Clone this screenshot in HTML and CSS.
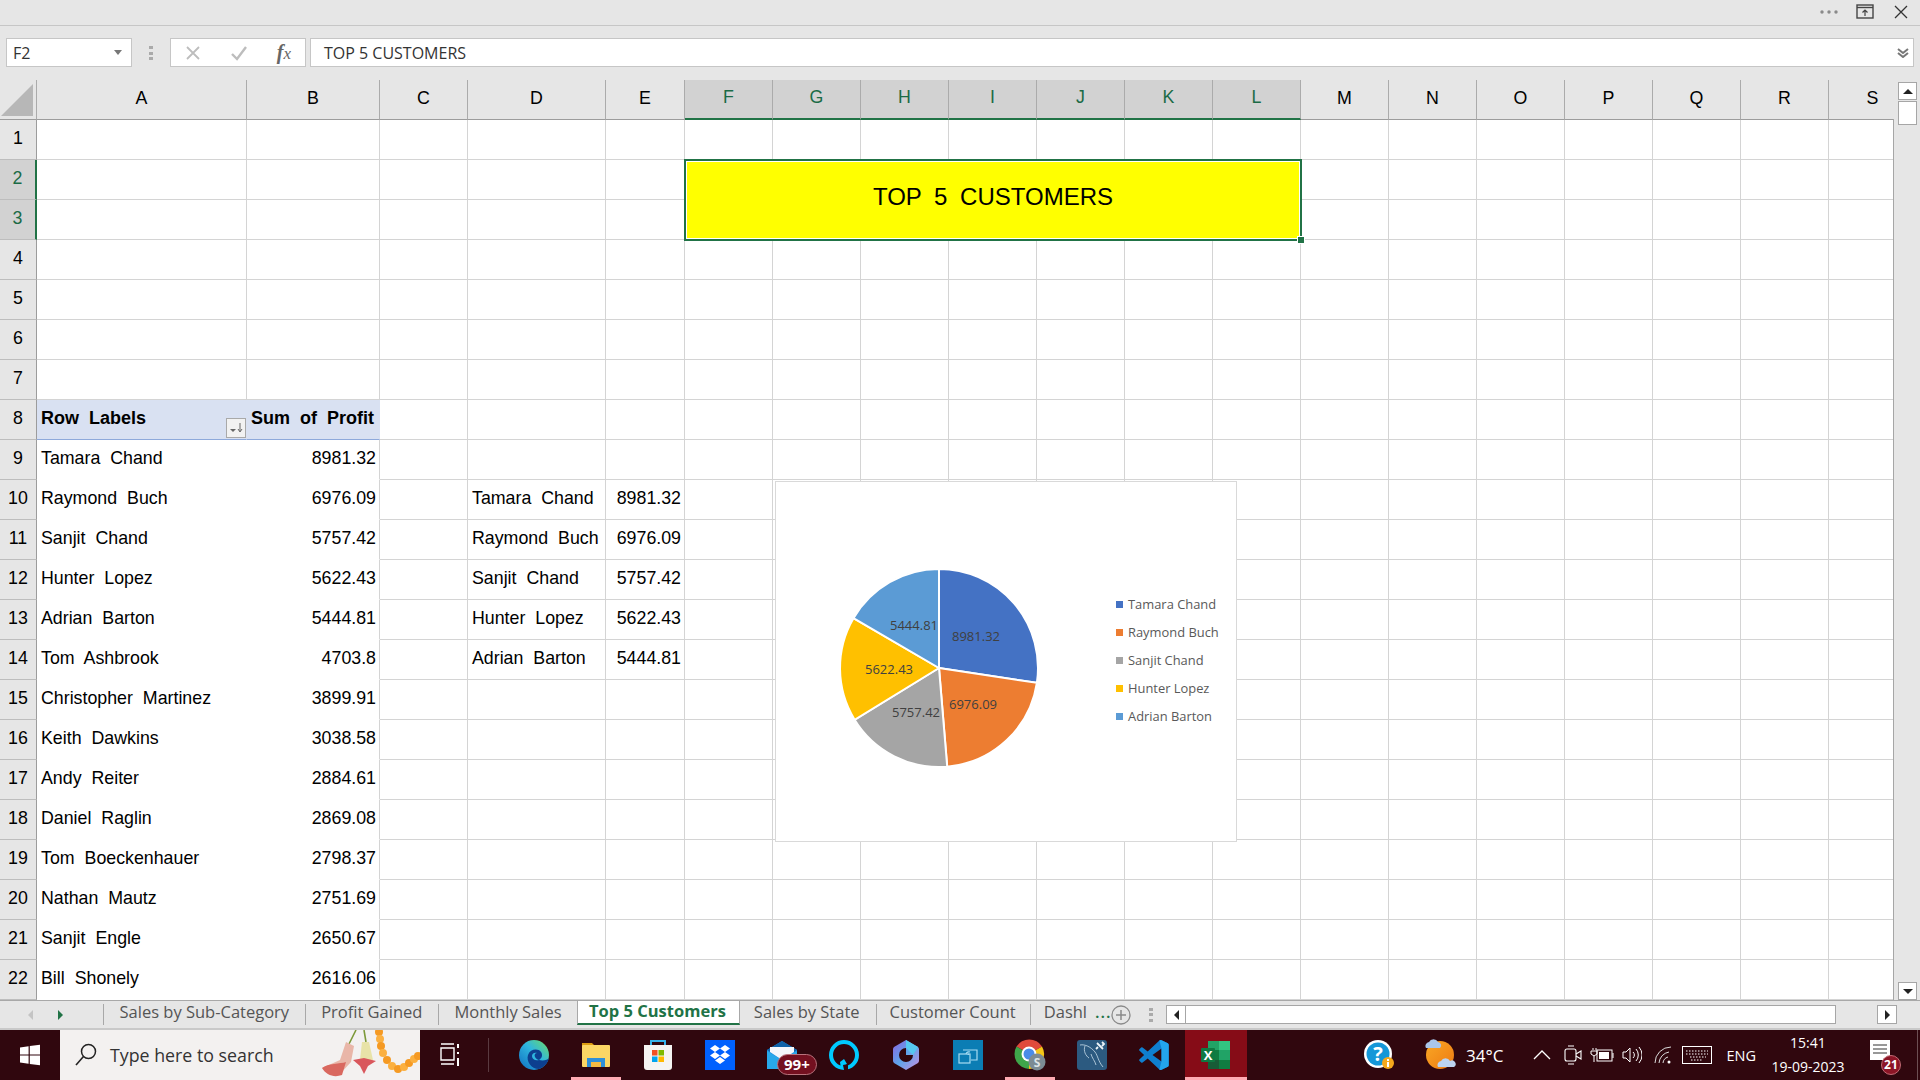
FILE: index.html
```html
<!DOCTYPE html>
<html lang="en">
<head>
<meta charset="utf-8">
<title>Top 5 Customers - Excel</title>
<link rel="stylesheet" href="styles.css">
</head>
<body>
<div class="titlebar">
  <svg class="dots" width="18" height="4" viewBox="0 0 18 4"><circle cx="2" cy="2" r="1.700" fill="#8a8a8a"/><circle cx="9" cy="2" r="1.700" fill="#8a8a8a"/><circle cx="16" cy="2" r="1.700" fill="#8a8a8a"/></svg>
  <svg class="ctl-restore" width="18" height="15" viewBox="0 0 18 15"><rect x="1" y="1" width="16" height="13" fill="none" stroke="#444" stroke-width="1.4"/><path d="M1 3.5H17" stroke="#444" stroke-width="1.4"/><path d="M9 12V6M6.5 8.5 9 6l2.5 2.5" fill="none" stroke="#444" stroke-width="1.2"/></svg>
  <svg class="ctl-close" width="14" height="14" viewBox="0 0 14 14"><path d="M1 1 13 13M13 1 1 13" stroke="#333" stroke-width="1.3"/></svg>
</div>
<div class="formulabar">
  <div class="namebox"><span>F2</span><i class="caret"></i></div>
  <div class="grip"></div>
  <div class="fxgroup">
    <svg width="16" height="16" viewBox="0 0 16 16"><path d="M2 2 14 14M14 2 2 14" stroke="#bdbdbd" stroke-width="1.8"/></svg>
    <svg width="18" height="16" viewBox="0 0 18 16"><path d="M2 9 7 14 16 2" fill="none" stroke="#bdbdbd" stroke-width="2.4"/></svg>
    <span class="fx"><b>f</b>x</span>
  </div>
  <div class="forminput"><span>TOP 5 CUSTOMERS</span><svg width="12" height="10" viewBox="0 0 12 10"><path d="M1 1 6 5 11 1M1 5 6 9 11 5" fill="none" stroke="#777" stroke-width="2"/></svg></div>
</div>
<div class="sheet">
  <div class="gridwrap">
    <table class="grid">
      <colgroup><col class="c-hd"><col class="c-a"><col class="c-b"><col class="c-c"><col class="c-d"><col class="c-e"><col class="c-n"><col class="c-n"><col class="c-n"><col class="c-n"><col class="c-n"><col class="c-n"><col class="c-n"><col class="c-n"><col class="c-n"><col class="c-n"><col class="c-n"><col class="c-n"><col class="c-n"><col class="c-n"></colgroup>
      <thead>
        <tr><th class="corner"><i></i></th><th>A</th><th>B</th><th>C</th><th>D</th><th>E</th><th class="on">F</th><th class="on">G</th><th class="on">H</th><th class="on">I</th><th class="on">J</th><th class="on">K</th><th class="on">L</th><th>M</th><th>N</th><th>O</th><th>P</th><th>Q</th><th>R</th><th>S</th></tr>
      </thead>
      <tbody>
        <tr><th>1</th><td></td><td></td><td></td><td></td><td></td><td></td><td></td><td></td><td></td><td></td><td></td><td></td><td></td><td></td><td></td><td></td><td></td><td></td><td></td></tr>
        <tr><th class="on">2</th><td></td><td></td><td></td><td></td><td></td><td class="title" colspan="7" rowspan="2">TOP 5 CUSTOMERS<i class="handle"></i></td><td></td><td></td><td></td><td></td><td></td><td></td><td></td></tr>
        <tr><th class="on">3</th><td></td><td></td><td></td><td></td><td></td><td></td><td></td><td></td><td></td><td></td><td></td><td></td></tr>
        <tr><th>4</th><td></td><td></td><td></td><td></td><td></td><td></td><td></td><td></td><td></td><td></td><td></td><td></td><td></td><td></td><td></td><td></td><td></td><td></td><td></td></tr>
        <tr><th>5</th><td></td><td></td><td></td><td></td><td></td><td></td><td></td><td></td><td></td><td></td><td></td><td></td><td></td><td></td><td></td><td></td><td></td><td></td><td></td></tr>
        <tr><th>6</th><td></td><td></td><td></td><td></td><td></td><td></td><td></td><td></td><td></td><td></td><td></td><td></td><td></td><td></td><td></td><td></td><td></td><td></td><td></td></tr>
        <tr><th>7</th><td></td><td></td><td></td><td></td><td></td><td></td><td></td><td></td><td></td><td></td><td></td><td></td><td></td><td></td><td></td><td></td><td></td><td></td><td></td></tr>
        <tr><th>8</th><td class="pv-h">Row Labels<span class="filter"><svg width="14" height="12" viewBox="0 0 14 12"><path d="M1 7H7L4 10Z" fill="#666"/><path d="M11 1V9M9 7 11 10 13 7" fill="none" stroke="#666"/></svg></span></td><td class="pv-h num">Sum of Profit</td><td></td><td></td><td></td><td></td><td></td><td></td><td></td><td></td><td></td><td></td><td></td><td></td><td></td><td></td><td></td><td></td><td></td></tr>
        <tr><th>9</th><td class="pv">Tamara Chand</td><td class="pv num">8981.32</td><td></td><td></td><td></td><td></td><td></td><td></td><td></td><td></td><td></td><td></td><td></td><td></td><td></td><td></td><td></td><td></td><td></td></tr>
        <tr><th>10</th><td class="pv">Raymond Buch</td><td class="pv num">6976.09</td><td></td><td>Tamara Chand</td><td class="num">8981.32</td><td></td><td></td><td></td><td></td><td></td><td></td><td></td><td></td><td></td><td></td><td></td><td></td><td></td><td></td></tr>
        <tr><th>11</th><td class="pv">Sanjit Chand</td><td class="pv num">5757.42</td><td></td><td>Raymond Buch</td><td class="num">6976.09</td><td></td><td></td><td></td><td></td><td></td><td></td><td></td><td></td><td></td><td></td><td></td><td></td><td></td><td></td></tr>
        <tr><th>12</th><td class="pv">Hunter Lopez</td><td class="pv num">5622.43</td><td></td><td>Sanjit Chand</td><td class="num">5757.42</td><td></td><td></td><td></td><td></td><td></td><td></td><td></td><td></td><td></td><td></td><td></td><td></td><td></td><td></td></tr>
        <tr><th>13</th><td class="pv">Adrian Barton</td><td class="pv num">5444.81</td><td></td><td>Hunter Lopez</td><td class="num">5622.43</td><td></td><td></td><td></td><td></td><td></td><td></td><td></td><td></td><td></td><td></td><td></td><td></td><td></td><td></td></tr>
        <tr><th>14</th><td class="pv">Tom Ashbrook</td><td class="pv num">4703.8</td><td></td><td>Adrian Barton</td><td class="num">5444.81</td><td></td><td></td><td></td><td></td><td></td><td></td><td></td><td></td><td></td><td></td><td></td><td></td><td></td><td></td></tr>
        <tr><th>15</th><td class="pv">Christopher Martinez</td><td class="pv num">3899.91</td><td></td><td></td><td></td><td></td><td></td><td></td><td></td><td></td><td></td><td></td><td></td><td></td><td></td><td></td><td></td><td></td><td></td></tr>
        <tr><th>16</th><td class="pv">Keith Dawkins</td><td class="pv num">3038.58</td><td></td><td></td><td></td><td></td><td></td><td></td><td></td><td></td><td></td><td></td><td></td><td></td><td></td><td></td><td></td><td></td><td></td></tr>
        <tr><th>17</th><td class="pv">Andy Reiter</td><td class="pv num">2884.61</td><td></td><td></td><td></td><td></td><td></td><td></td><td></td><td></td><td></td><td></td><td></td><td></td><td></td><td></td><td></td><td></td><td></td></tr>
        <tr><th>18</th><td class="pv">Daniel Raglin</td><td class="pv num">2869.08</td><td></td><td></td><td></td><td></td><td></td><td></td><td></td><td></td><td></td><td></td><td></td><td></td><td></td><td></td><td></td><td></td><td></td></tr>
        <tr><th>19</th><td class="pv">Tom Boeckenhauer</td><td class="pv num">2798.37</td><td></td><td></td><td></td><td></td><td></td><td></td><td></td><td></td><td></td><td></td><td></td><td></td><td></td><td></td><td></td><td></td><td></td></tr>
        <tr><th>20</th><td class="pv">Nathan Mautz</td><td class="pv num">2751.69</td><td></td><td></td><td></td><td></td><td></td><td></td><td></td><td></td><td></td><td></td><td></td><td></td><td></td><td></td><td></td><td></td><td></td></tr>
        <tr><th>21</th><td class="pv">Sanjit Engle</td><td class="pv num">2650.67</td><td></td><td></td><td></td><td></td><td></td><td></td><td></td><td></td><td></td><td></td><td></td><td></td><td></td><td></td><td></td><td></td><td></td></tr>
        <tr><th>22</th><td class="pv">Bill Shonely</td><td class="pv num">2616.06</td><td></td><td></td><td></td><td></td><td></td><td></td><td></td><td></td><td></td><td></td><td></td><td></td><td></td><td></td><td></td><td></td><td></td></tr>
      </tbody>
    </table>
    <div class="chart">
      <svg class="pie" width="340" height="359" viewBox="0 0 340 359">
        <g transform="translate(163 186)" stroke="#fff" stroke-width="2">
          <path d="M0 0V-99A99 99 0 0 1 97.88 14.85Z" fill="#4472c4"/>
          <path d="M0 0L97.88 14.85A99 99 0 0 1 8.21 98.65Z" fill="#ed7d31"/>
          <path d="M0 0L8.21 98.65A99 99 0 0 1-84.39 51.76Z" fill="#a5a5a5"/>
          <path d="M0 0L-84.39 51.76A99 99 0 0 1-85.54-49.82Z" fill="#ffc000"/>
          <path d="M0 0L-85.54-49.82A99 99 0 0 1 0-99Z" fill="#5b9bd5"/>
        </g>
        <g class="pie-labels">
          <text x="200" y="159">8981.32</text>
          <text x="197" y="226.5">6976.09</text>
          <text x="140" y="235">5757.42</text>
          <text x="113" y="191.5">5622.43</text>
          <text x="138" y="148">5444.81</text>
        </g>
      </svg>
      <ul class="legend">
        <li><i class="sw sw1"></i>Tamara Chand</li>
        <li><i class="sw sw2"></i>Raymond Buch</li>
        <li><i class="sw sw3"></i>Sanjit Chand</li>
        <li><i class="sw sw4"></i>Hunter Lopez</li>
        <li><i class="sw sw5"></i>Adrian Barton</li>
      </ul>
    </div>
  </div>
  <div class="vscroll">
    <div class="sbtn"><i class="tri-up"></i></div>
    <div class="vthumb"></div>
    <div class="sbtn sbtn-end"><i class="tri-down"></i></div>
  </div>
</div>
<div class="tabbar">
  <div class="tabnav"><i class="tri-left dim"></i><i class="tri-right green"></i></div>
  <div class="tabs">
    <span class="tab">Sales by Sub-Category</span>
    <span class="tab">Profit Gained</span>
    <span class="tab">Monthly Sales</span>
    <span class="tab active">Top 5 Customers</span>
    <span class="tab plain">Sales by State</span>
    <span class="tab tight">Customer Count</span>
    <span class="tab tight">Dashl</span>
    <span class="more">...</span>
  </div>
  <svg class="addsheet" width="20" height="20" viewBox="0 0 20 20"><circle cx="10" cy="10" r="9" fill="none" stroke="#8a8a8a" stroke-width="1.3"/><path d="M10 5V15M5 10H15" stroke="#8a8a8a" stroke-width="1.5"/></svg>
  <div class="grip small"></div>
  <div class="hscroll">
    <div class="hbtn"><i class="tri-left"></i></div>
    <div class="hthumb"></div>
    <div class="hbtn"><i class="tri-right"></i></div>
  </div>
</div>
<div class="taskbar">
  <div class="start"><svg width="22" height="22" viewBox="0 0 22 22"><path d="M1 3.5 9.6 2.3V10.4H1ZM10.8 2.1 21 .7V10.4H10.8ZM1 11.6H9.6V19.7L1 18.5ZM10.8 11.6H21V21.3L10.8 19.9Z" fill="#fff"/></svg></div>
  <div class="search">
    <svg width="24" height="26" viewBox="0 0 24 26"><circle cx="14.5" cy="9.5" r="7" fill="none" stroke="#222" stroke-width="1.5"/><path d="M9.5 14.5 2 23" stroke="#222" stroke-width="1.6"/></svg>
    <span class="search-text">Type here to search</span>
    <svg class="garland" width="110" height="50" viewBox="0 0 110 50">
      <g transform="translate(8 0)">
        <path d="M38 0 31 14M46 0 48 12" stroke="#7d9a3a" stroke-width="1.6" fill="none"/>
        <path d="M28 12 36 16 33 32 22 44 4 38 22 30Z" fill="#e9b6a8"/>
        <path d="M4 38 C10 33 22 34 28 32 L24 45 C16 48 8 45 4 38Z" fill="#d9685f"/>
        <path d="M44 12 51 12 55 30 46 32 42 30Z" fill="#e8e3a8"/>
        <path d="M35 30 L46 28 L58 31 L50 36 L46 44 L42 36Z" fill="#d9575c"/>
      </g>
      <g fill="#f59a23">
        <circle cx="69" cy="2" r="4"/><circle cx="70" cy="9" r="4" fill="#fbb040"/><circle cx="71" cy="16" r="4"/><circle cx="73" cy="23" r="4" fill="#fbb040"/><circle cx="77" cy="30" r="4"/><circle cx="82" cy="36" r="4" fill="#fbb040"/><circle cx="88" cy="39" r="4"/><circle cx="94" cy="37" r="4" fill="#fbb040"/><circle cx="99" cy="33" r="4"/><circle cx="104" cy="29" r="4" fill="#fbb040"/><circle cx="108" cy="26" r="4"/>
      </g>
    </svg>
  </div>
  <div class="taskview"><svg width="20" height="24" viewBox="0 0 20 24"><path d="M1 1H14M1 5H14V17H1ZM1 21H14" fill="none" stroke="#fff" stroke-width="1.4"/><path d="M18 1V5M18 9V11M18 15V23" stroke="#fff" stroke-width="2"/></svg></div>
  <div class="apps">
    <div class="app">
      <svg width="32" height="32" viewBox="0 0 32 32"><defs><linearGradient id="eg" x1="0" y1="1" x2="1" y2="0"><stop offset="0" stop-color="#0f6cc0"/><stop offset=".55" stop-color="#2fb6df"/><stop offset="1" stop-color="#6fdc62"/></linearGradient></defs><circle cx="16" cy="16" r="15" fill="url(#eg)"/><path d="M31 19C30 21 25 22 21 21 24 19 25 16 23 13 20 9 12 10 10 16 8 22 13 30 21 30 26 28 30 24 31 19Z" fill="#0d3f8f"/><path d="M21 21C17 22 14 20 14 17 14 15 16 13 19 14 17 14 16 16 17 18 18 20 20 21 21 21Z" fill="#2fb6df"/></svg>
    </div>
    <div class="app run">
      <svg width="30" height="28" viewBox="0 0 30 28"><path d="M1 2H11L14 5H1Z" fill="#dc9c12"/><rect x="1" y="4" width="28" height="22" rx="1" fill="#fbd665"/><path d="M6 26V17H24V26H20V21H10V26Z" fill="#2f8fd8"/><rect x="10" y="21" width="10" height="5" fill="#f5b942"/></svg>
    </div>
    <div class="app">
      <svg width="30" height="32" viewBox="0 0 30 32"><path d="M8 7V2H22V7" fill="none" stroke="#35b2ea" stroke-width="2"/><path d="M1 6H29V28A3 3 0 0 1 26 31H4A3 3 0 0 1 1 28Z" fill="#f5f4f2"/><rect x="9" y="11" width="5.5" height="5.5" fill="#f25022"/><rect x="15.5" y="11" width="5.5" height="5.5" fill="#7fba00"/><rect x="9" y="17.5" width="5.5" height="5.5" fill="#00a4ef"/><rect x="15.5" y="17.5" width="5.5" height="5.5" fill="#ffb900"/></svg>
    </div>
    <div class="app">
      <svg width="30" height="30" viewBox="0 0 30 30"><rect width="30" height="30" fill="#0061fe"/><path d="M10 5 15 8.5 10 12 5 8.5ZM20 5 25 8.5 20 12 15 8.5ZM10 12 15 15.5 10 19 5 15.5ZM20 12 25 15.5 20 19 15 15.5ZM15 17 20 20.5 15 24 10 20.5Z" fill="#fff"/></svg>
    </div>
    <div class="app mail">
      <svg width="30" height="30" viewBox="0 0 30 30"><path d="M0 10 15 1 30 10V29H0Z" fill="#1f8fe0"/><path d="M15 1 30 10 15 19 0 10Z" fill="#0f62a8"/><path d="M3 7H27V12L15 20 3 12Z" fill="#f4f7fb"/><path d="M0 11 15 20 30 11V29H0Z" fill="#28a8ea"/></svg>
      <span class="badge">99+</span>
    </div>
    <div class="app">
      <svg width="32" height="32" viewBox="0 0 32 32"><circle cx="16" cy="16" r="13" fill="none" stroke="#00caff" stroke-width="4"/><path d="M12 23 16 20 19 25 13 30Z" fill="#00caff"/><path d="M15 26 20 25 20 31 16 31Z" fill="#30070e"/></svg>
    </div>
    <div class="app">
      <svg width="28" height="32" viewBox="0 0 28 32"><defs><linearGradient id="bg" x1="0" y1="0" x2="1" y2="1"><stop offset="0" stop-color="#8a63e0"/><stop offset=".5" stop-color="#5ea5ea"/><stop offset="1" stop-color="#c98ee0"/></linearGradient></defs><path d="M14 1 26 8A3 3 0 0 1 27 10V22A3 3 0 0 1 26 24L14 31 2 24A3 3 0 0 1 1 22V10A3 3 0 0 1 2 8Z" fill="url(#bg)"/><path d="M14 9A7 7 0 1 0 21 16H14Z" fill="#2f060d"/><path d="M14 1 26 8 21 16 14 9Z" fill="#56c8f0"/></svg>
    </div>
    <div class="app">
      <svg width="30" height="30" viewBox="0 0 30 30"><rect width="30" height="30" fill="#0b7db4"/><g fill="none" stroke="#a8dcf2" stroke-width="1.2"><path d="M10 10H24V20H18"/><rect x="6" y="14" width="11" height="9"/><path d="M13 14A3 3 0 0 1 17 12M15 15A1 1 0 0 1 16 14"/></g></svg>
    </div>
    <div class="app run">
      <svg width="34" height="34" viewBox="0 0 34 34"><path d="M16 16 3.5 8.5A15 15 0 0 1 29 8.5Z" fill="#e04a3c"/><path d="M16 16 29 8.5A15 15 0 0 1 16 31Z" fill="#f5c518"/><path d="M16 16 16 31A15 15 0 0 1 3.500 8.500Z" fill="#3fa64a"/><circle cx="16" cy="16" r="7.5" fill="#fff"/><circle cx="16" cy="16" r="5.500" fill="#4a8ce8"/><circle cx="24" cy="24" r="8.500" fill="#7c8b94"/><text class="chrome-s" x="24" y="28.500">S</text></svg>
    </div>
    <div class="app">
      <svg width="30" height="30" viewBox="0 0 30 30"><rect width="30" height="30" rx="3" fill="#2c5a80"/><path d="M3 5C8 4 14 7 18 12 21 16 21 21 26 27M8 6C6 11 9 16 12 18M14 14C15 18 18 21 19 25" fill="none" stroke="#b9cfdf" stroke-width=".9"/><path d="M20 3 26 9M25 2 27 4 25 6M21 7 19 9" fill="none" stroke="#eef4f8" stroke-width="1.8"/></svg>
    </div>
    <div class="app">
      <svg width="30" height="30" viewBox="0 0 100 100"><path d="M96 11 75 1A6 6 0 0 0 68 2L29 38 12 25A4 4 0 0 0 7 25L2 30A4 4 0 0 0 2 36L17 50 2 64A4 4 0 0 0 2 70L7 75A4 4 0 0 0 12 75L29 62 68 98A6 6 0 0 0 75 99L96 89A6 6 0 0 0 99 84V16A6 6 0 0 0 96 11ZM75 72 45 50 75 28Z" fill="#0f7fd0"/><path d="M75 1A6 6 0 0 0 68 2L75 28V72L68 98A6 6 0 0 0 75 99L96 89A6 6 0 0 0 99 84V16A6 6 0 0 0 96 11Z" fill="#23a5ee"/></svg>
    </div>
    <div class="app excel">
      <svg width="30" height="30" viewBox="0 0 30 30"><rect x="7" y="1" width="11" height="9" fill="#21a366"/><rect x="18" y="1" width="11" height="9" fill="#33c481"/><rect x="7" y="10" width="11" height="10" fill="#107c41"/><rect x="18" y="10" width="11" height="10" fill="#21a366"/><rect x="7" y="20" width="22" height="9" fill="#185c37"/><rect x="18" y="20" width="11" height="9" fill="#107c41"/><rect x="0" y="8" width="14" height="14" rx="1" fill="#0f7a42"/><text class="excel-x" x="7" y="19.500">X</text></svg>
    </div>
  </div>
  <div class="tray">
    <svg class="t-help" width="34" height="34" viewBox="0 0 34 34"><circle cx="16" cy="16" r="14" fill="#fff"/><circle cx="16" cy="16" r="11.500" fill="#1497d8"/><text class="help-q" x="16" y="23">?</text><circle cx="26" cy="25" r="6" fill="#f5a81c"/><rect x="25" y="24" width="2" height="5" fill="#fff"/><rect x="25" y="21" width="2" height="2" fill="#fff"/></svg>
    <svg class="t-weather" width="32" height="32" viewBox="0 0 32 32"><defs><linearGradient id="sun" x1="0" y1="0" x2="1" y2="1"><stop offset="0" stop-color="#f9a825"/><stop offset="1" stop-color="#ee7a12"/></linearGradient></defs><circle cx="15" cy="16" r="14" fill="url(#sun)"/><path d="M1 9A4 4 0 0 1 4 3 5 5 0 0 1 13 3 3.500 3.500 0 0 1 15 9Z" fill="#a9c6ea"/><path d="M13 28A4 4 0 0 1 16 22 5 5 0 0 1 25 22 3.500 3.500 0 0 1 29 28Z" fill="#bcd3ef"/></svg>
    <span class="t-temp">34°C</span>
    <svg class="t-chev" width="18" height="10" viewBox="0 0 18 10"><path d="M1 9 9 1 17 9" fill="none" stroke="#fff" stroke-width="1.3"/></svg>
    <svg class="t-meet" width="18" height="20" viewBox="0 0 18 20"><rect x="1" y="4" width="11" height="12" rx="2" fill="none" stroke="#fff" stroke-width="1.1"/><path d="M12 9 17 6V14L12 11M4 1H10M4 19H10" fill="none" stroke="#fff" stroke-width="1.1"/></svg>
    <svg class="t-batt" width="24" height="16" viewBox="0 0 24 16"><rect x="7" y="3" width="15" height="11" fill="none" stroke="#fff"/><rect x="9" y="5" width="10" height="7" fill="#fff"/><path d="M23 6V11M3 1V3M6 1V3M1 4H7V7L4 9 1 7ZM4 9V15" fill="none" stroke="#fff"/></svg>
    <svg class="t-vol" width="20" height="20" viewBox="0 0 20 20"><path d="M1 7H4L8 3V17L4 13H1Z" fill="none" stroke="#fff"/><path d="M11 7A4 4 0 0 1 11 13M14 4A9 9 0 0 1 14 16M17 2A12 12 0 0 1 17 18" fill="none" stroke="#fff"/></svg>
    <svg class="t-wifi" width="18" height="18" viewBox="0 0 18 18"><path d="M1 17A16 16 0 0 1 17 1M5 17A12 12 0 0 1 15 6M9 17A7 7 0 0 1 14 11" fill="none" stroke="#ddd"/><circle cx="15" cy="16" r="1.500" fill="#fff"/></svg>
    <svg class="t-kbd" width="30" height="18" viewBox="0 0 30 18"><rect x=".5" y=".5" width="29" height="17" fill="none" stroke="#fff"/><path d="M4 5H26M4 8H26M8 11H24M9 14H21" stroke="#fff" stroke-dasharray="1.500 1.500"/></svg>
    <span class="t-eng">ENG</span>
    <div class="t-clock"><span>15:41</span><span>19-09-2023</span></div>
    <div class="t-notif">
      <svg width="20" height="20" viewBox="0 0 20 20"><rect width="20" height="20" fill="#fff"/><path d="M3 5H17M3 9H17M3 13H17" stroke="#333" stroke-width="1.200"/></svg>
      <span class="n-badge">21</span>
    </div>
    <div class="t-edge"></div>
  </div>
</div>
</body>
</html>
```
FILE: styles.css
```css
* { box-sizing: border-box; }
html, body { margin: 0; height: 100%; }
body {
  width: 1920px; height: 1080px; overflow: hidden;
  display: flex; flex-direction: column;
  background: #e6e6e6;
  font-family: "Liberation Sans", Arial, sans-serif;
  color: #000;
}
i { display: block; }

/* title strip */
.titlebar {
  height: 26px; flex: none;
  display: flex; align-items: center; justify-content: flex-end;
  border-bottom: 1px solid #c6c6c6;
  padding: 0 12px 2px 0;
}
.dots { margin-right: 18px; }
.ctl-restore { margin-right: 20px; }

/* formula bar */
.formulabar {
  height: 54px; flex: none;
  display: flex; align-items: flex-start;
  padding: 12px 6px 0 6px;
  font-family: "Open Sans", sans-serif;
  font-size: 16px; color: #333;
}
.namebox, .fxgroup, .forminput {
  height: 29px; background: #fff;
  border: 1px solid #c6c6c6;
  display: flex; align-items: center;
}
.namebox { width: 126px; padding: 0 9px 0 6px; justify-content: space-between; }
.caret { width: 0; height: 0; border: 4px solid transparent; border-top: 5px solid #777; border-bottom: 0; }
.grip { width: 4px; height: 14px; margin: 8px 17px 0 17px; border-top: 3px solid #aaa; border-bottom: 3px solid #aaa; background: linear-gradient(#aaa,#aaa) center/4px 3px no-repeat; }
.grip.small { margin: 0 13px 0 18px; height: 14px; flex: none; }
.fxgroup { width: 136px; margin-left: 0; padding: 0 14px 0 14px; justify-content: space-between; }
.fx { font-family: "Liberation Serif", serif; font-style: italic; color: #666; font-size: 17px; }
.fx b { font-size: 20px; font-weight: 700; }
.forminput { flex: 1; margin-left: 4px; padding: 0 4px 0 13px; justify-content: space-between; }

/* sheet */
.sheet { height: 920px; flex: none; display: flex; }
.gridwrap { position: relative; width: 1894px; height: 920px; overflow: hidden; background: #fff; flex: none; }
.gridwrap::after { content: ""; position: absolute; right: 0; top: 39px; bottom: 0; width: 1px; background: #a6a6a6; }
.grid { table-layout: fixed; border-collapse: separate; border-spacing: 0; width: 1917px; font-size: 17.8px; word-spacing: 5px; }
.c-hd { width: 37px; } .c-a { width: 210px; } .c-b { width: 133px; } .c-c { width: 88px; }
.c-d { width: 138px; } .c-e { width: 79px; } .c-n { width: 88px; }
.grid th { background: #e6e6e6; font-weight: 400; padding: 0; text-align: center; }
.grid thead th { height: 40px; padding-bottom: 3px; border-right: 1px solid #ababab; border-bottom: 1px solid #9c9c9c; }
.grid thead th.on { background: #d2d2d2; color: #1b6b46; border-bottom: 2px solid #217346; }
.grid tbody th { height: 40px; padding-bottom: 2px; border-right: 1px solid #9c9c9c; border-bottom: 1px solid #bdbdbd; }
.grid tbody th.on { background: #d2d2d2; color: #1b6b46; border-right: 2px solid #217346; }
.grid td { height: 40px; padding: 0 3px 2px 4px; border-right: 1px solid #d4d4d4; border-bottom: 1px solid #d4d4d4; white-space: nowrap; overflow: hidden; }
.grid .num { text-align: right; }
.grid td.pv { border-right-color: #fff; border-bottom-color: #fff; }
.grid td.pv.num { border-right-color: #d4d4d4; }
.grid td.pv-h { position: relative; background: #d9e1f2; font-size: 18px; font-weight: 700; border-right-color: #d9e1f2; border-bottom: 1px solid #8ea9db; overflow: visible; }
.grid td.pv-h.num { padding-right: 5px; border-right-color: #d9e1f2; }
.filter { position: absolute; right: 0; bottom: 1px; width: 20px; height: 20px; background: #f2f2f2; border: 1px solid #a9a9a9; display: flex; align-items: center; justify-content: center; }
.corner { position: relative; }
.corner i { position: absolute; right: 3px; bottom: 3px; width: 0; height: 0; border-style: solid; border-width: 0 0 32px 32px; border-color: transparent transparent #b7b7b7 transparent; }
.grid td.title { position: relative; overflow: visible; text-align: center; background: #ff0; font-size: 24px; word-spacing: 6px; padding: 0 0 6px; border: 1px solid #217346; box-shadow: 0 0 0 1px #217346, inset 0 0 0 1px #fff; }
.handle { position: absolute; right: -4px; bottom: -4px; width: 6px; height: 6px; background: #217346; box-shadow: 0 0 0 1px #fff; }

/* chart */
.chart {
  position: absolute; left: 775px; top: 401px; width: 462px; height: 361px;
  background: #fff; border: 1px solid #d9d9d9;
  display: flex; font-family: "Open Sans", sans-serif;
}
.pie { flex: none; }
.pie-labels { font-size: 13px; fill: #404040; text-anchor: middle; }
.legend { list-style: none; margin: 0; padding: 108px 0 0 0; font-size: 12.9px; color: #595959; }
.legend li { height: 28.1px; display: flex; align-items: center; gap: 5px; white-space: nowrap; }
.sw { width: 7px; height: 7px; }
.sw1 { background: #4472c4; } .sw2 { background: #ed7d31; } .sw3 { background: #a5a5a5; } .sw4 { background: #ffc000; } .sw5 { background: #5b9bd5; }

/* scrollbars */
.vscroll { flex: 1; display: flex; flex-direction: column; padding: 2px 3px 0 4px; }
.sbtn { height: 18px; flex: none; background: #fff; border: 1px solid #a6a6a6; display: flex; align-items: center; justify-content: center; }
.sbtn-end { margin-top: auto; }
.vthumb { height: 24px; margin-top: 1px; background: #fff; border: 1px solid #a6a6a6; }
.tri-up { width: 0; height: 0; border: 5px solid transparent; border-top: 0; border-bottom: 5px solid #222; }
.tri-down { width: 0; height: 0; border: 5px solid transparent; border-bottom: 0; border-top: 5px solid #222; }
.tri-left { width: 0; height: 0; border: 5px solid transparent; border-left: 0; border-right: 5px solid #222; }
.tri-right { width: 0; height: 0; border: 5px solid transparent; border-right: 0; border-left: 5px solid #222; }
.tri-left.dim { border-right-color: #c4c4c4; }
.tri-right.green { border-left-color: #217346; }

/* tabs */
.tabbar {
  height: 30px; flex: none; display: flex; align-items: center;
  border-top: 1px solid #a8a8a8; border-bottom: 2px solid #c9c9c9;
  font-family: "Open Sans", sans-serif; font-size: 16.5px; color: #555;
}
.tabnav { width: 103px; flex: none; display: flex; align-items: center; gap: 25px; padding-left: 28px; }
.tabs { width: 1008px; flex: none; display: flex; align-items: flex-start; height: 100%; }
.tab { height: 21px; margin-top: 3px; padding: 0 15.5px; line-height: 15px; border-left: 1px solid #a8a8a8; white-space: nowrap; flex: none; }
.tab.active { height: 24px; margin-top: 0; padding: 0 13px 0 11px; line-height: 19px; background: #fff; color: #217346; font-weight: 700; border-left: 1px solid #a8a8a8; border-right: 1px solid #a8a8a8; border-bottom: 2px solid #217346; }
.tab.plain { border-left: 0; padding: 0 16px 0 14px; }
.tab.tight { padding: 0 14px 0 13px; }
.more { color: #217346; margin: -1px 0 0 -6px; font-weight: 600; letter-spacing: 1px; }
.addsheet { flex: none; }
.hscroll { width: 731px; flex: none; display: flex; align-items: center; height: 19px; }
.hbtn { width: 20px; height: 19px; flex: none; background: #fff; border: 1px solid #a6a6a6; display: flex; align-items: center; justify-content: center; }
.hthumb { width: 650px; height: 19px; background: #fff; border: 1px solid #a6a6a6; border-left: 0; margin-right: 41px; }

/* taskbar */
.taskbar { height: 50px; flex: none; display: flex; background: #30070e; color: #fff; font-family: "Open Sans", sans-serif; }
.start { width: 60px; flex: none; display: flex; align-items: center; justify-content: center; }
.search { width: 360px; flex: none; display: flex; align-items: center; background: #f3f1f0; padding-left: 14px; color: #333; }
.search-text { margin-left: 12px; font-size: 17.8px; white-space: nowrap; }
.garland { margin-left: auto; }
.taskview { width: 69px; flex: none; display: flex; align-items: center; justify-content: center; position: relative; border-right: 1px solid #5a3a40; margin: 8px 0; padding-right: 8px; }
.apps { display: flex; margin-left: 14px; flex: none; }
.app { width: 62px; height: 50px; flex: none; position: relative; display: flex; align-items: center; justify-content: center; }
.app.run::after { content: ""; position: absolute; left: 6px; right: 6px; bottom: 0; height: 3px; background: #ffabb3; }
.app.excel { background: #860c17; }
.app.excel::after { content: ""; position: absolute; left: 0; right: 0; bottom: 0; height: 3px; background: #ffabb3; }
.badge { position: absolute; left: 26px; top: 24px; height: 21px; padding: 0 6px; border-radius: 11px; background: #741020; border: 1px solid #b9737d; font-size: 15px; font-weight: 700; line-height: 19px; }
.chrome-s { font-size: 12px; font-weight: 700; fill: #dde3e6; text-anchor: middle; }
.excel-x { font-size: 13px; font-weight: 700; fill: #fff; text-anchor: middle; }
.help-q { font-size: 20px; font-weight: 700; fill: #fff; text-anchor: middle; }

.tray { flex: 1; display: flex; align-items: center; position: relative; }
.tray svg { flex: none; }
.t-help { margin-left: 115px; }
.t-weather { margin-left: 29px; }
.t-temp { margin-left: 9px; font-size: 17px; }
.t-chev { margin-left: 30px; }
.t-meet { margin-left: 13px; }
.t-batt { margin-left: 8px; }
.t-vol { margin-left: 8px; }
.t-wifi { margin-left: 12px; }
.t-kbd { margin-left: 10px; }
.t-eng { margin-left: 14px; font-size: 14.5px; }
.t-clock { width: 84px; margin-left: 10px; display: flex; flex-direction: column; align-items: center; font-size: 14px; line-height: 24px; }
.t-notif { width: 30px; height: 40px; margin-left: 20px; position: relative; padding-top: 5px; }
.n-badge { position: absolute; left: 11px; top: 20px; width: 20px; height: 20px; border-radius: 50%; background: #8c1526; border: 1px solid #c06a74; font-size: 12px; font-weight: 700; line-height: 18px; text-align: center; }
.t-edge { position: absolute; right: 2px; top: 0; bottom: 0; width: 1px; background: #6d4f53; }
```
